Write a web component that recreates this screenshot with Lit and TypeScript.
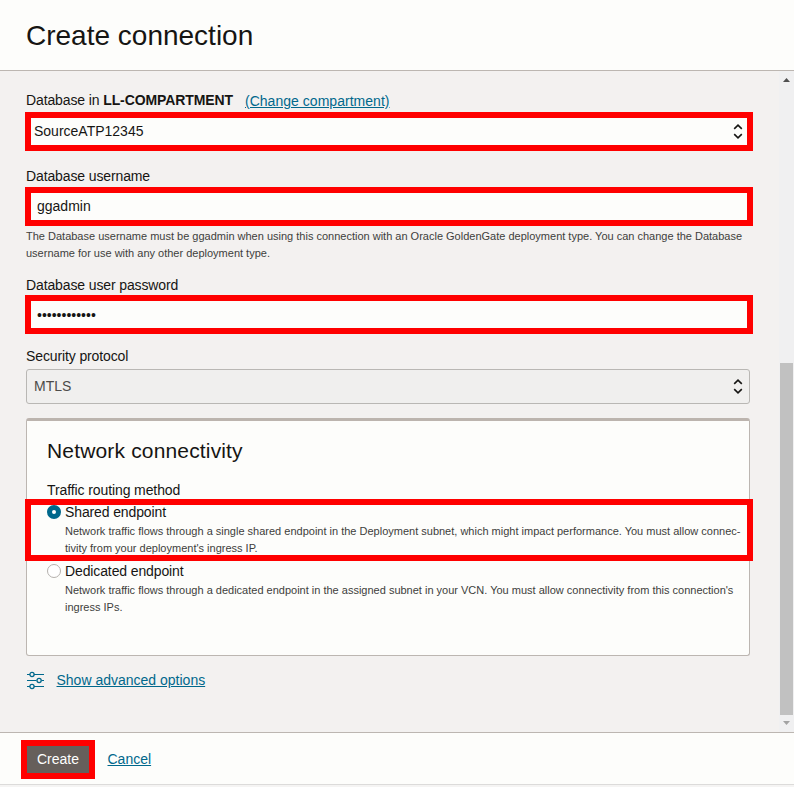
import { LitElement, html, css } from "lit";
import { customElement, property } from "lit/decorators.js";

@customElement("sort-arrows")
class SortArrows extends LitElement {
  static styles = css`
    :host { display: block; width: 10px; height: 15px; }
    svg { display: block; }
  `;
  render() {
    return html`<svg width="10" height="15" viewBox="0 0 10 15" fill="none" stroke="#161513" stroke-width="1.6">
      <path d="M1.2 4.8 L5 1.2 L8.8 4.8 M1.2 10.2 L5 13.8 L8.8 10.2" />
    </svg>`;
  }
}

@customElement("radio-option")
class RadioOption extends LitElement {
  @property() label = "";
  @property({ type: Array }) lines: string[] = [];
  @property({ type: Boolean }) checked = false;
  static styles = css`
    :host { display: flow-root; position: relative; height: 59px; }
    .row { display: flex; align-items: center; height: 21px; margin-top: -1px; padding-bottom: 1px; font-size: 14px; gap: 4px; letter-spacing: -0.12px; }
    .dot { box-sizing: border-box; width: 14px; height: 14px; border-radius: 50%; border: 1px solid #b5b1ad; background: #fff; }
    .dot.on { border: 5px solid #00688c; }
    .help { margin-left: 18px; font-size: 11px; line-height: 17px; color: #403e3c; white-space: nowrap; }
    .ring { position: absolute; left: -22px; top: -3px; width: 716px; height: 50px; border: 6px solid #f00; }
  `;
  render() {
    return html`
      <div class="row"><span class="dot ${this.checked ? "on" : ""}"></span><span>${this.label}</span></div>
      <div class="help">${this.lines.map((l) => html`<div>${l}</div>`)}</div>
      ${this.checked ? html`<div class="ring"></div>` : ""}
    `;
  }
}

@customElement("app-root")
class AppRoot extends LitElement {
  static styles = css`
    :host {
      display: flex; flex-direction: column; box-sizing: border-box; height: 787px; overflow: hidden;
      font-family: "Liberation Sans", Arial, sans-serif; font-size: 14px; color: #161513; background: #f5f4f3;
    }
    .head { height: 70px; background: #fdfdfb; border-bottom: 1px solid #bcb6b1; padding-left: 26px; flex: none; }
    h1 { margin: 0; font-weight: 400; font-size: 28px; line-height: 72px; height: 70px; }
    .body { height: 661px; flex: none; display: flex; background: #f3f1f0; border-bottom: 1px solid #bcb6b1; }
    .form { width: 724px; padding: 19px 0 0 26px; }
    .label { height: 20px; line-height: 20px; white-space: nowrap; display: flex; letter-spacing: -0.12px; }
    .label b { white-space: pre; letter-spacing: -0.1px; }
    .label a { margin-left: 12px; padding-top: 1px; letter-spacing: 0.03px; }
    a { color: #00688c; text-decoration: underline; }
    .field { box-sizing: border-box; height: 39px; margin: 0 -3px 15px -1px; border: 6px solid #f00; background: #fdfdfb;
      display: flex; align-items: center; justify-content: space-between; padding: 0 4px 1px 3px; }
    .first { margin-top: 2px; }
    .user { margin-top: 1px; margin-bottom: 2px; padding-left: 6px; }
    .pass { margin-bottom: 12px; padding: 1px 0 0 6px; }
    .help { font-size: 11px; line-height: 17px; color: #403e3c; margin-bottom: 13px; white-space: nowrap; }
    .select { box-sizing: border-box; height: 35px; margin-top: 3px; border: 1px solid #b9b7b4; border-radius: 3px; background: #f0efee;
      display: flex; align-items: center; justify-content: space-between; padding: 0 6px 0 7px; color: #4d4b49; }
    .select span { padding-bottom: 2px; }
    .panel { box-sizing: border-box; height: 238px; margin-top: 14px; border: 1px solid #bcb6b1; border-top: 3px solid #bcb4ae;
      border-radius: 3px; background: #fdfdfb; padding: 15px 0 0 20px; }
    h2 { margin: 0 0 14px; font-weight: 400; font-size: 21px; line-height: 30px; white-space: nowrap; letter-spacing: 0.16px; }
    .group { height: 22px; line-height: 20px; letter-spacing: -0.1px; }
    .advanced { display: flex; align-items: center; gap: 12.5px; height: 20px; margin-top: 14px; }
    .advanced svg { display: block; }
    .bar { margin-left: auto; width: 15px; background: #f0f0f1; display: flex; flex-direction: column; align-items: center; }
    .bar svg { display: block; }
    .up { margin-top: 7px; fill: #505050; }
    .thumb { margin-top: 281px; width: 13px; height: 352px; background: #c1c1c1; }
    .down { margin-top: 6px; fill: #a3a3a3; }
    .foot { height: 51px; flex: none; background: #fdfdfb; border-bottom: 1px solid #dcdbda; display: flex; align-items: flex-start; }
    button { box-sizing: border-box; width: 74px; height: 39px; margin: 7px 12.5px 0 21px; padding: 0 0 2px; border: 6px solid #f00;
      background: #665f5b; color: #fff; font: 14px "Liberation Sans", Arial, sans-serif; }
    .cancel { margin-top: 16px; line-height: 20px; }
  `;
  render() {
    return html`
      <div class="head"><h1>Create connection</h1></div>
      <div class="body">
        <div class="form">
          <div class="label"><span>Database in</span><b> LL-COMPARTMENT</b><a>(Change compartment)</a></div>
          <div class="field first"><span>SourceATP12345</span><sort-arrows></sort-arrows></div>
          <div class="label">Database username</div>
          <div class="field user"><span>ggadmin</span></div>
          <div class="help">
            <div>The Database username must be ggadmin when using this connection with an Oracle GoldenGate deployment type. You can change the Database</div>
            <div>username for use with any other deployment type.</div>
          </div>
          <div class="label">Database user password</div>
          <div class="field pass"><span>••••••••••••</span></div>
          <div class="label">Security protocol</div>
          <div class="select"><span>MTLS</span><sort-arrows></sort-arrows></div>
          <div class="panel">
            <h2>Network connectivity</h2>
            <div class="group">Traffic routing method</div>
            <radio-option checked label="Shared endpoint" .lines=${[
              "Network traffic flows through a single shared endpoint in the Deployment subnet, which might impact performance. You must allow connec-",
              "tivity from your deployment's ingress IP.",
            ]}></radio-option>
            <radio-option label="Dedicated endpoint" .lines=${[
              "Network traffic flows through a dedicated endpoint in the assigned subnet in your VCN. You must allow connectivity from this connection's",
              "ingress IPs.",
            ]}></radio-option>
          </div>
          <div class="advanced">
            <svg width="18" height="20" viewBox="0 0 18 20" fill="none" stroke="#00688c">
              <path d="M1 4.5H4M8 4.5H18M1 10.5H10.5M15.5 10.5H18M1 16.5H4M8 16.5H18" />
              <g stroke-width="1.3"><circle cx="6" cy="4.5" r="2.1" /><circle cx="13.1" cy="10.5" r="2.1" /><circle cx="6" cy="16.5" r="2.1" /></g>
            </svg>
            <a>Show advanced options</a>
          </div>
        </div>
        <div class="bar">
          <svg class="up" width="7" height="4" viewBox="0 0 7 4"><path d="M0 4L3.5 0L7 4Z" /></svg>
          <i class="thumb"></i>
          <svg class="down" width="7" height="4" viewBox="0 0 7 4"><path d="M0 0H7L3.5 4Z" /></svg>
        </div>
      </div>
      <div class="foot"><button>Create</button><a class="cancel">Cancel</a></div>
    `;
  }
}
